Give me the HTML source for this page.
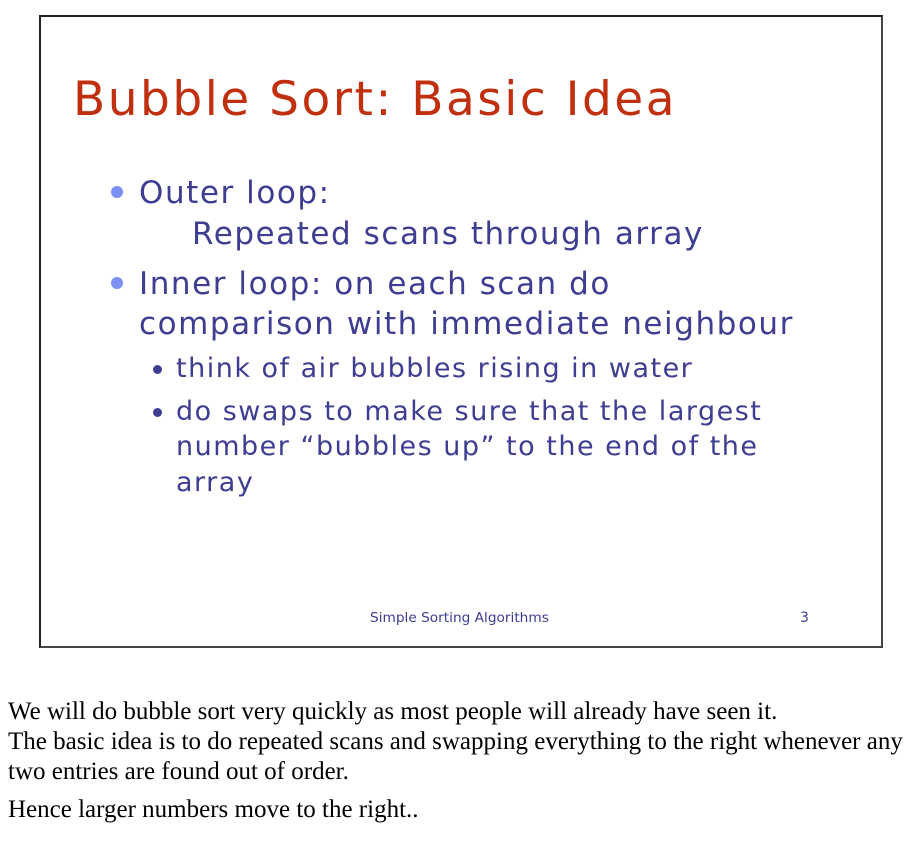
<!DOCTYPE html>
<html><head><style>
body{margin:0;width:917px;height:852px;background:#fff;position:relative;overflow:hidden}
.box{position:absolute;left:39px;top:15px;width:840px;height:629px;border:2px solid #222;border-right-color:#444;border-bottom-color:#444}
.s{position:absolute;font-family:"DejaVu Sans","Liberation Sans",sans-serif;color:#3d3d92;white-space:nowrap}
.b{font-size:31px;letter-spacing:1.55px}
.c{font-size:27px;letter-spacing:1.5px}
.t{position:absolute;font-family:"Liberation Serif",serif;font-size:25px;line-height:30px;color:#000;white-space:nowrap;left:8px}
.dot{position:absolute;border-radius:50%;background:#7b8ff5}
.d2{position:absolute;border-radius:50%;background:#3d3d92}
</style></head><body>
<div class="box"></div>
<div class="s" style="left:73px;top:72px;font-size:47px;letter-spacing:2.5px;color:#c0300f">Bubble Sort: Basic Idea</div>
<div class="dot" style="left:111px;top:186px;width:12px;height:12px"></div>
<div class="s b" style="left:139px;top:175px">Outer loop:</div>
<div class="s b" style="left:192px;top:216px">Repeated scans through array</div>
<div class="dot" style="left:111px;top:277px;width:12px;height:12px"></div>
<div class="s b" style="left:139px;top:266px">Inner loop: on each scan do</div>
<div class="s b" style="left:139px;top:306px">comparison with immediate neighbour</div>
<div class="d2" style="left:153px;top:365px;width:9px;height:9px"></div>
<div class="s c" style="left:176px;top:353px">think of air bubbles rising in water</div>
<div class="d2" style="left:153px;top:408px;width:9px;height:9px"></div>
<div class="s c" style="left:176px;top:396px">do swaps to make sure that the largest</div>
<div class="s c" style="left:176px;top:431px">number “bubbles up” to the end of the</div>
<div class="s c" style="left:176px;top:467px">array</div>
<div class="s" style="left:370px;top:610px;font-size:13.7px">Simple Sorting Algorithms</div>
<div class="s" style="left:800px;top:610px;font-size:14px">3</div>
<div class="t" style="top:697px">We will do bubble sort very quickly as most people will already have seen it.</div>
<div class="t" style="top:727px">The basic idea is to do repeated scans and swapping everything to the right whenever any</div>
<div class="t" style="top:757px">two entries are found out of order.</div>
<div class="t" style="top:795px">Hence larger numbers move to the right..</div>
</body></html>
